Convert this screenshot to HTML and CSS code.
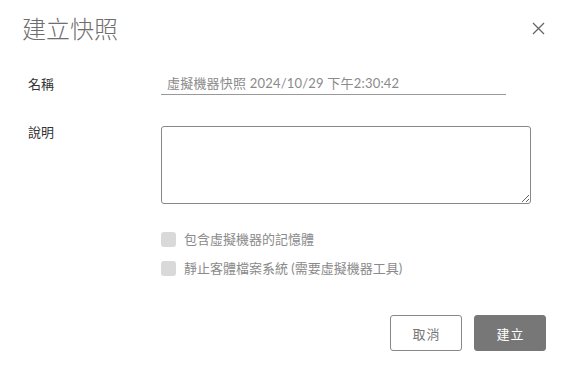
FILE: index.html
```html
<!DOCTYPE html>
<html lang="zh-Hant">
<head>
    <meta charset="UTF-8">
    <title>建立快照</title>
    <link rel="stylesheet" href="styles.css">
</head>
<body>
    <div class="modal">
        <div class="modal-header">
            <h1>建立快照</h1>
            <button class="close-btn" aria-label="關閉">
                <svg width="13" height="13" viewBox="0 0 13 13">
                    <path d="M1 1 L12 12 M12 1 L1 12" stroke="#666" stroke-width="1.3" fill="none"/>
                </svg>
            </button>
        </div>

        <div class="form-row row-name">
            <label for="snapName">名稱</label>
            <input type="text" id="snapName" value="虛擬機器快照 2024/10/29 下午2:30:42">
        </div>

        <div class="form-row row-desc">
            <label for="snapDesc">說明</label>
            <textarea id="snapDesc"></textarea>
        </div>

        <div class="checks">
            <label class="check"><input type="checkbox" disabled> 包含虛擬機器的記憶體</label>
            <label class="check"><input type="checkbox" disabled> 靜止客體檔案系統 (需要虛擬機器工具)</label>
        </div>

        <div class="modal-footer">
            <button class="btn btn-outline">取消</button>
            <button class="btn btn-primary">建立</button>
        </div>
    </div>
</body>
</html>
```

FILE: styles.css
```css
body {
    margin: 0;
    background: #fff;
    font-family: Lato, "Noto Sans CJK TC", sans-serif;
    font-size: 13px;
    color: #333;
}
.modal {
    width: 561px;
    height: 365px;
    box-sizing: border-box;
    padding: 12px 15px 0 22px;
}
.modal-header {
    display: flex;
    justify-content: space-between;
    align-items: center;
    height: 32px;
}
.modal-header h1 {
    margin: 0;
    font-family: "Noto Sans CJK TC", sans-serif;
    font-size: 24px;
    font-weight: 300;
    line-height: 32px;
    color: #6e6e6e;
}
.close-btn {
    border: none;
    background: none;
    padding: 0;
    margin-right: 1px;
    width: 13px;
    height: 13px;
    display: flex;
}
.form-row {
    display: grid;
    grid-template-columns: 133px auto;
    padding-left: 6px;
}
.form-row label {
    font-family: "Noto Sans CJK TC", sans-serif;
    line-height: 20px;
    color: #333;
}
.row-name {
    margin-top: 29px;
    align-items: center;
}
.row-name input {
    width: 345px;
    height: 22px;
    box-sizing: border-box;
    border: none;
    border-bottom: 1px solid #999;
    padding: 0 6px 2px;
    font-family: Lato, "Noto Sans CJK TC", sans-serif;
    font-size: 13px;
    letter-spacing: 0.2px;
    color: #8a8a8a;
    outline: none;
}
.row-desc {
    margin-top: 27px;
    align-items: start;
}
.row-desc textarea {
    margin-top: 4px;
    width: 370px;
    height: 78px;
    box-sizing: border-box;
    border: 1px solid #888;
    border-radius: 3px;
    font-family: inherit;
    padding: 4px;
}
.checks {
    margin-left: 139px;
    margin-top: 25px;
    display: flex;
    flex-direction: column;
    gap: 9px;
}
.check {
    display: flex;
    align-items: center;
    gap: 8px;
    line-height: 20px;
    font-family: Lato, "Noto Sans CJK TC", sans-serif;
    color: #8a8a8a;
}
.check input {
    appearance: none;
    margin: 0;
    width: 15px;
    height: 15px;
    border-radius: 3px;
    background: #d9d9d9;
}
.modal-footer {
    display: flex;
    justify-content: flex-end;
    gap: 12px;
    margin-top: 37px;
}
.btn {
    width: 72px;
    height: 36px;
    box-sizing: border-box;
    border-radius: 3px;
    font-family: "Noto Sans CJK TC", sans-serif;
    font-size: 13px;
    letter-spacing: 1px;
    padding: 0 0 0 1px;
    cursor: pointer;
}
.btn-outline {
    background: #fff;
    border: 1px solid #888;
    color: #777;
}
.btn-primary {
    background: #777;
    border: 1px solid #777;
    color: #fff;
}
```
